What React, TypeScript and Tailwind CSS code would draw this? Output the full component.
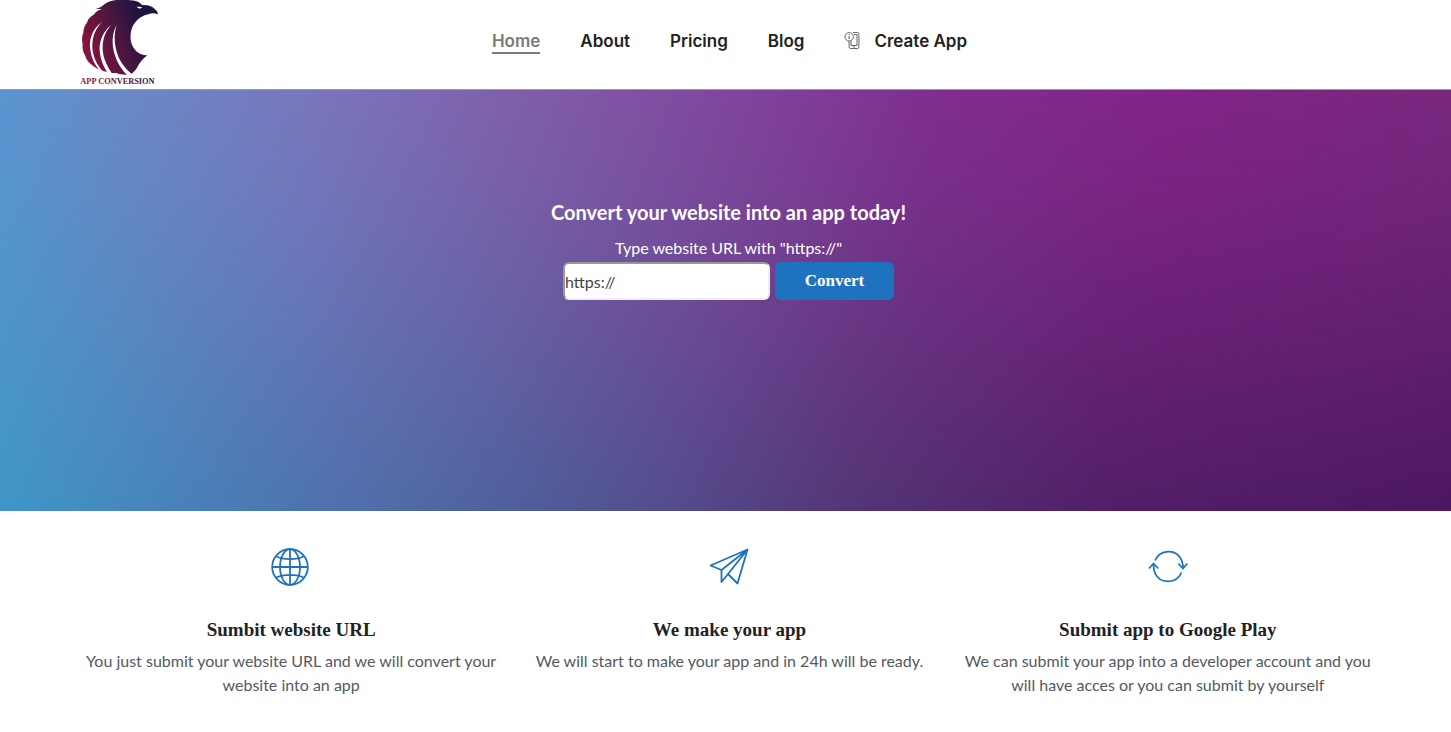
import type { ReactNode } from 'react'

type NavItem = {
  label: string
  href: string
  active?: boolean
  icon?: ReactNode
}

type Feature = {
  title: string
  text: string
  icon: ReactNode
}

const navItems: NavItem[] = [
  { label: 'Home', href: '#home', active: true },
  { label: 'About', href: '#about' },
  { label: 'Pricing', href: '#pricing' },
  { label: 'Blog', href: '#blog' },
  { label: 'Create App', href: '#create', icon: <PhoneInfoIcon /> },
]

const features: Feature[] = [
  {
    title: 'Sumbit website URL',
    text: 'You just submit your website URL and we will convert your website into an app',
    icon: <GlobeIcon />,
  },
  {
    title: 'We make your app',
    text: 'We will start to make your app and in 24h will be ready.',
    icon: <PlaneIcon />,
  },
  {
    title: 'Submit app to Google Play',
    text: 'We can submit your app into a developer account and you will have acces or you can submit by yourself',
    icon: <RefreshIcon />,
  },
]

export default function App() {
  return (
    <div className="min-h-screen bg-white font-['Lato',sans-serif] text-base text-[#54595f]">
      <Header />
      <main>
        <Hero />
        <Features />
      </main>
    </div>
  )
}

function Header() {
  return (
    <header className="grid grid-cols-[1fr_auto_1fr] items-start border-b border-[#999] pl-20 pr-18">
      <a href="#home" aria-label="App Conversion" className="block h-[89px] w-20">
        <Logo />
      </a>
      <nav className="flex gap-10 pt-[30px] font-['Inter',sans-serif] text-[17px] font-semibold leading-[22px] text-[#222]">
        {navItems.map((item) => (
          <a
            key={item.label}
            href={item.href}
            className={
              item.active
                ? 'border-b-2 border-[#7a7a7a] text-[#7a7a7a]'
                : 'flex items-center gap-3 border-b-2 border-transparent'
            }
          >
            {item.icon}
            {item.label}
          </a>
        ))}
      </nav>
    </header>
  )
}

function Hero() {
  return (
    <section
      id="home"
      className="relative h-[421px] bg-[linear-gradient(to_right,#4097c8_0%,#4881ba_13%,#5070ab_24%,#4f5f9b_36%,#54498a_48%,#533576_59%,#521f68_76%,#4d1762_100%)]"
    >
      <div className="absolute inset-0 bg-[linear-gradient(to_right,#5b94d0_0%,#6b88c4_9%,#7a75bb_22%,#8060aa_35%,#81459b_51%,#802f8e_64%,#832487_80%,#78287f_100%)] [mask-image:linear-gradient(to_bottom,#000_0%,#000000d0_25%,#00000080_55%,transparent_100%)]" />
      <form
        className="relative flex flex-col items-center pl-1.5 pt-[108px] text-white"
        onSubmit={(event) => event.preventDefault()}
      >
        <h1 className="text-xl font-bold leading-7">Convert your website into an app today!</h1>
        <label htmlFor="website-url" className="mt-2.5 leading-6">
          Type website URL with "https://"
        </label>
        <div className="mt-0.5 flex gap-[5px]">
          <input
            id="website-url"
            type="text"
            defaultValue="https://"
            className="h-[38px] w-[207px] rounded-md border-2 border-b-[#eee] border-l-[#999] border-r-[#eee] border-t-[#999] bg-white text-[#444]"
          />
          <button
            type="submit"
            className="h-[38px] w-[119px] rounded-md bg-[#1e73be] font-['Liberation_Serif',serif] text-[17px] font-bold leading-6"
          >
            Convert
          </button>
        </div>
      </form>
    </section>
  )
}

function Features() {
  return (
    <section className="grid grid-cols-3 pl-18 pr-16 pt-9 text-center">
      {features.map((feature) => (
        <article key={feature.title} className="flex flex-col items-center px-2">
          {feature.icon}
          <h2 className="mt-8 font-['Liberation_Serif',serif] text-[19px] font-bold leading-[22px] text-[#222]">
            {feature.title}
          </h2>
          <p className="mt-2 leading-6">{feature.text}</p>
        </article>
      ))}
    </section>
  )
}

function Logo() {
  return (
    <svg viewBox="30 0 240 267" className="block h-[89px] w-20" aria-hidden="true">
      <defs>
        <linearGradient id="eagle" gradientUnits="userSpaceOnUse" x1="36" y1="150" x2="225" y2="80">
          <stop offset="0" stopColor="#8d1240" />
          <stop offset="0.5" stopColor="#52163f" />
          <stop offset="1" stopColor="#1d1440" />
        </linearGradient>
        <linearGradient id="wordmark" gradientUnits="userSpaceOnUse" x1="32" y1="0" x2="258" y2="0">
          <stop offset="0" stopColor="#9c1238" />
          <stop offset="1" stopColor="#24143c" />
        </linearGradient>
      </defs>
      <path
        fill="url(#eagle)"
        d="M104 12C124 -2 158 -3 182 1C202 2 209 8 216 15C235 14 248 19 255 28C261 33 264 38 264 43C254 39 244 39 235 43C211 48 190 66 184 91C178 116 183 135 195 149C205 161 218 165 232 166C219 177 211 185 205 196C200 208 192 215 184 222C170 226 148 223 139 219C128 220 118 219 110 215L102 214C88 210 74 203 63 193C54 186 49 178 46 168C39 156 36 144 38 134C35 121 36 108 40 98C40 85 45 74 51 68C54 55 63 48 71 44C78 34 88 29 96 27L77 27C89 24 97 19 104 12Z"
      />
      <g fill="#fff">
        <path d="M96 66C72 82 58 110 60 142C63 174 75 198 92 213L101 216C80 195 69 170 67 143C66 108 78 84 96 66Z" />
        <path d="M123 76C100 92 87 125 89 152C92 182 102 203 114 219L127 222C108 195 99 170 98 148C97 118 106 95 123 76Z" />
        <path d="M140 76C126 100 125 130 133 160C141 190 156 210 172 226L186 223C160 200 147 180 140 155C132 125 132 100 140 76Z" />
        <path d="M200 20C204 26 211 27 217 23L211 20Z" />
      </g>
      <text
        x="31"
        y="252"
        fill="url(#wordmark)"
        className="font-['Liberation_Serif',serif] text-[25px] font-bold"
      >
        APP CONVERSION
      </text>
    </svg>
  )
}

function PhoneInfoIcon() {
  return (
    <svg
      viewBox="0 0 18 20"
      className="h-5 w-[18px]"
      fill="none"
      stroke="#555"
      strokeWidth="0.9"
      aria-hidden="true"
    >
      <path d="M9 1.5h4.5a1.4 1.4 0 0 1 1.4 1.4v13.2a1.4 1.4 0 0 1-1.4 1.4h-7a1.4 1.4 0 0 1-1.4-1.4V10" />
      <path d="M10 3.5h3v11H7V10M9 16h2" />
      <circle cx="5.2" cy="5.8" r="4.2" />
      <path d="M5.2 5.3v2.8M5.2 3.3v1" strokeWidth="1.1" />
    </svg>
  )
}

function GlobeIcon() {
  return (
    <svg viewBox="0 0 40 40" className="size-10" fill="none" stroke="#1e73be" strokeWidth="1.8" aria-hidden="true">
      <circle cx="19" cy="20" r="17.8" />
      <ellipse cx="19" cy="20" rx="10" ry="17.8" />
      <path d="M19 2.2v35.6M1.2 20h35.6M5 9.2C12 13 26 13 33 9.2M5 30.8C12 27 26 27 33 30.8" />
    </svg>
  )
}

function PlaneIcon() {
  return (
    <svg
      viewBox="0 0 40 40"
      className="size-10"
      fill="none"
      stroke="#1e73be"
      strokeWidth="1.8"
      strokeLinejoin="round"
      aria-hidden="true"
    >
      <path d="M38.5 2.5L1.5 18.5L12.5 23L38.5 2.5L28.5 36.5L19 27L38.5 2.5Z" />
      <path d="M12.5 23V35L19 27" />
    </svg>
  )
}

function RefreshIcon() {
  return (
    <svg viewBox="0 0 40 40" className="size-10" fill="none" stroke="#1e73be" strokeWidth="1.8" aria-hidden="true">
      <path d="M7 13.5C12 2.5 28 1 33.5 13C34.5 15.3 35 17.5 35 20.5" />
      <path d="M30.3 16.5L35 21.5L39.3 16.5" />
      <path d="M33.5 25.5C28.5 37 12 37.5 7 26C5.8 23.3 5.5 21 5.5 17.5" />
      <path d="M1 21.5L5.5 16.5L10.3 21.5" />
    </svg>
  )
}
